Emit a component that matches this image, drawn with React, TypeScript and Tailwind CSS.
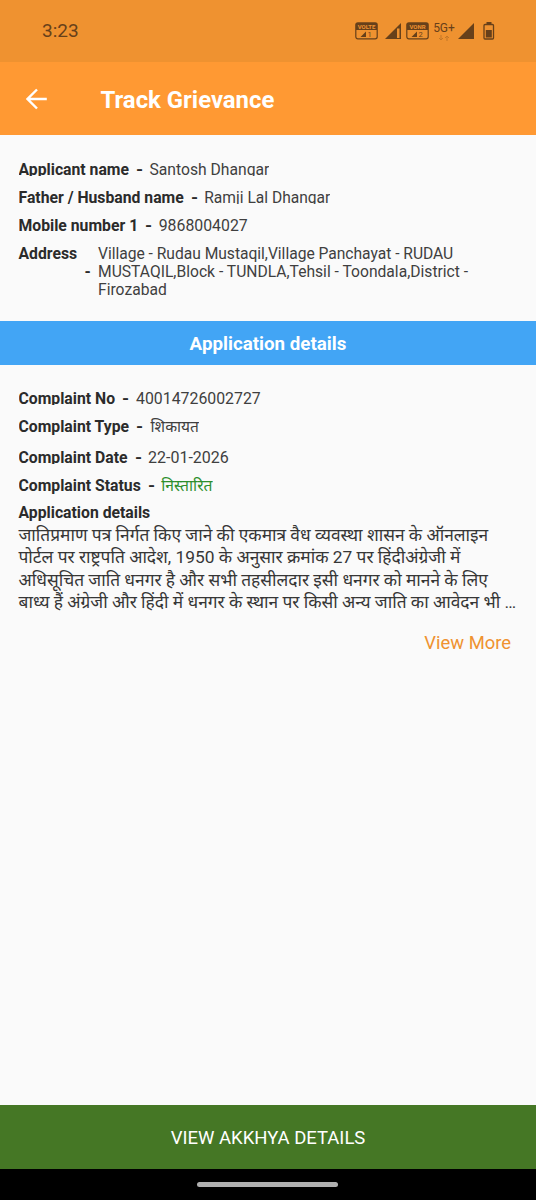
import React from 'react';

type RowProps = { label: string; value: string; clip: string; row: string; font?: string; color?: string };

function Row({ label, value, clip, row, font = 'text-[15.7px]', color = 'text-[#3f3f3f]' }: RowProps) {
  return (
    <div className={`${row} flex items-start text-[15.75px] leading-5`}>
      <div className={`${clip} flex overflow-hidden whitespace-nowrap`}>
        <span className="font-bold">{label}</span>
        <span className="ml-[7px] w-[13.5px] origin-left scale-x-115 font-bold">-</span>
        <span className={`${font} ${color}`}>{value}</span>
      </div>
    </div>
  );
}

function SimBadge({ label, slot }: { label: string; slot: string }) {
  return (
    <svg width="23" height="18" viewBox="0 0 23 18">
      <rect x="0.8" y="0.8" width="21.4" height="16" rx="2" fill="none" stroke="#67401a" strokeWidth="1.2" />
      <path d="M1 1h21v7H1z" fill="#67401a" />
      <text x="11.5" y="6.8" textAnchor="middle" fontSize="6" fontWeight="700" fill="#ef9230">{label}</text>
      <path d="M5.5 15H11V9.5z" fill="#67401a" />
      <text x="12.5" y="15.2" fontSize="7.5" fill="#67401a">{slot}</text>
    </svg>
  );
}

export default function App() {
  return (
    <div className="flex h-[1200px] w-[536px] flex-col bg-[#fafafa] font-['Roboto','Noto_Sans',sans-serif] text-[16px] text-[#2b2b2b]">
      <div className="flex h-[62px] items-center bg-[#ef9230] pl-[42px] text-[#67401a]">
        <span className="w-[312.5px] text-[19px]">3:23</span>
        <SimBadge label="VOLTE" slot="1" />
        <svg className="ml-[7.5px]" width="16" height="16" viewBox="0 0 16 16">
          <path d="M0 16 16 0v16z" fill="#67401a" />
          <path d="M12 5.5h2.5V15H12z" fill="#ef9230" />
        </svg>
        <div className="ml-[5px]"><SimBadge label="VONR" slot="2" /></div>
        <div className="ml-[3px] flex w-[24px] flex-col items-center">
          <span className="text-[12px] leading-[13px]">5G+</span>
          <svg width="12" height="6" viewBox="0 0 12 6" fill="none" stroke="#c37727" strokeWidth="1">
            <path d="M3 0v5M1 3l2 2 2-2M9 6V1M7 3l2-2 2 2" />
          </svg>
        </div>
        <svg className="ml-[2px]" width="16" height="16" viewBox="0 0 16 16"><path d="M0 16 16 0v16z" fill="#67401a" /></svg>
        <svg className="ml-[9px]" width="12" height="18" viewBox="0 0 12 18">
          <path d="M3.5 0h5v3h-5z" fill="#67401a" />
          <rect x="1" y="2.5" width="9.5" height="14.5" rx="1" fill="none" stroke="#67401a" strokeWidth="1.3" />
          <path d="M2.8 8h6v7.5h-6z" fill="#67401a" />
        </svg>
      </div>
      <header className="flex h-[73px] items-center bg-[#ff9933] pl-[26px] text-white">
        <svg className="mr-[52.5px]" width="22" height="22" viewBox="0 0 22 22" fill="none" stroke="white" strokeWidth="2.4">
          <path d="M20.8 11H2M11 1.5 1.5 11l9.5 9.5" />
        </svg>
        <h1 className="pt-[4px] text-[23.9px] font-bold">Track Grievance</h1>
      </header>
      <section className="h-[186px] pl-[18.5px] pt-[25px]">
        <Row label="Applicant name" value="Santosh Dhangar" clip="h-[16px]" row="h-[28px]" />
        <Row label="Father / Husband name" value="Ramji Lal Dhangar" clip="h-[16px]" row="h-[28px]" font="text-[15.6px]" />
        <Row label="Mobile number 1" value="9868004027" clip="h-[17px]" row="h-[28px]" font="text-[15.85px]" />
        <div className="flex">
          <span className="w-[66px] text-[15.75px] font-bold leading-5">Address</span>
          <span className="w-[13.5px] pt-[18px] font-bold leading-5">-</span>
          <p className="whitespace-nowrap pt-px text-[15.65px] leading-[18px] text-[#3f3f3f]">
            <span className="tracking-[-0.03px]">Village - Rudau Mustaqil,Village Panchayat - RUDAU</span><br />MUSTAQIL,Block - TUNDLA,Tehsil - Toondala,District -<br />Firozabad
          </p>
        </div>
      </section>
      <h2 className="flex h-[44px] items-center justify-center bg-[#42a5f5] pt-[3px] text-[18.75px] font-bold text-white">Application details</h2>
      <section className="flex flex-col pl-[18.5px] pt-[24px]">
        <Row label="Complaint No" value="40014726002727" clip="h-[16px]" row="h-[28px]" font="text-[15.85px] pl-[0.5px]" />
        <Row label="Complaint Type" value="शिकायत" clip="h-[22px]" row="h-[31px]" font="pl-px text-[15.5px]" />
        <Row label="Complaint Date" value="22-01-2026" clip="h-[16px]" row="h-[28px]" font="text-[16px]" />
        <Row label="Complaint Status" value="निस्तारित" clip="h-[22px]" row="h-[27px]" color="text-[#2d8f2d]" />
        <h3 className="h-[21px] text-[15.75px] font-bold leading-5">Application details</h3>
        <p className="whitespace-nowrap text-[17.35px] leading-[22.3px] text-[#363636]">
          जातिप्रमाण पत्र निर्गत किए जाने की एकमात्र वैध व्यवस्था शासन के ऑनलाइन<br />
          पोर्टल पर राष्ट्रपति आदेश, 1950 के अनुसार क्रमांक 27 पर हिंदीअंग्रेजी में<br />
          अधिसूचित जाति धनगर है और सभी तहसीलदार इसी धनगर को मानने के लिए<br />
          बाध्य हैं अंग्रेजी और हिंदी में धनगर के स्थान पर किसी अन्य जाति का आवेदन भी …
        </p>
        <button className="mr-[25px] mt-[15.5px] self-end text-[18.4px] text-[#ef9230]">View More</button>
      </section>
      <button className="mt-auto h-[64px] bg-[#457725] pt-[4px] text-[18.5px] text-white">VIEW AKKHYA DETAILS</button>
      <div className="flex h-[31px] items-center justify-center bg-black">
        <div className="mr-px h-[5px] w-[141px] rounded-full bg-[#b0b0b0]" />
      </div>
    </div>
  );
}
